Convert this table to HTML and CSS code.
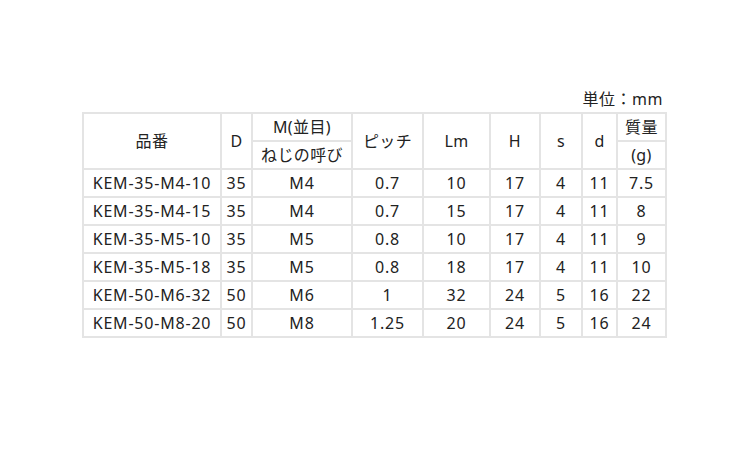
FILE: index.html
```html
<!DOCTYPE html>
<html lang="ja">
<head>
<meta charset="utf-8">
<link rel="stylesheet" href="styles.css">
</head>
<body>
<div class="wrap">
<table class="spec">
<caption>単位：mm</caption>
<colgroup>
<col class="c1"><col class="c2"><col class="c3"><col class="c4"><col class="c5"><col class="c6"><col class="c7"><col class="c8"><col class="c9">
</colgroup>
<thead>
<tr><th rowspan="2">品番</th><th rowspan="2">D</th><th>M(並目)</th><th rowspan="2">ピッチ</th><th rowspan="2">Lm</th><th rowspan="2">H</th><th rowspan="2">s</th><th rowspan="2">d</th><th>質量</th></tr>
<tr><th>ねじの呼び</th><th>(g)</th></tr>
</thead>
<tbody>
<tr><td>KEM-35-M4-10</td><td>35</td><td>M4</td><td>0.7</td><td>10</td><td>17</td><td>4</td><td>11</td><td>7.5</td></tr>
<tr><td>KEM-35-M4-15</td><td>35</td><td>M4</td><td>0.7</td><td>15</td><td>17</td><td>4</td><td>11</td><td>8</td></tr>
<tr><td>KEM-35-M5-10</td><td>35</td><td>M5</td><td>0.8</td><td>10</td><td>17</td><td>4</td><td>11</td><td>9</td></tr>
<tr><td>KEM-35-M5-18</td><td>35</td><td>M5</td><td>0.8</td><td>18</td><td>17</td><td>4</td><td>11</td><td>10</td></tr>
<tr><td>KEM-50-M6-32</td><td>50</td><td>M6</td><td>1</td><td>32</td><td>24</td><td>5</td><td>16</td><td>22</td></tr>
<tr><td>KEM-50-M8-20</td><td>50</td><td>M8</td><td>1.25</td><td>20</td><td>24</td><td>5</td><td>16</td><td>24</td></tr>
</tbody>
</table>
</div>
</body>
</html>
```
FILE: styles.css
```css
html, body {
  margin: 0;
  padding: 0;
  background: #fff;
}
body {
  font-family: "Noto Sans", "Noto Sans CJK JP", sans-serif;
  font-size: 16px;
  color: #222;
}
.wrap {
  padding-top: 87px;
  padding-left: 82px;
}
.spec {
  border-collapse: collapse;
  table-layout: fixed;
  width: 583px;
}
.spec caption {
  caption-side: top;
  text-align: right;
  line-height: 24px;
  height: 25px;
  padding-right: 4px;
  letter-spacing: 0.5px;
}
.spec th, .spec td {
  border: 2px solid #e4e4e4;
  padding: 1px 0;
  line-height: 24px;
  text-align: center;
  font-weight: normal;
  white-space: nowrap;
  overflow: hidden;
}
.spec td {
  letter-spacing: 0.8px;
}
.spec th {
  letter-spacing: 0.4px;
}
.c1 { width: 138px; }
.c2 { width: 31px; }
.c3 { width: 100px; }
.c4 { width: 71px; }
.c5 { width: 67px; }
.c6 { width: 50px; }
.c7 { width: 42px; }
.c8 { width: 35px; }
.c9 { width: 49px; }
```
